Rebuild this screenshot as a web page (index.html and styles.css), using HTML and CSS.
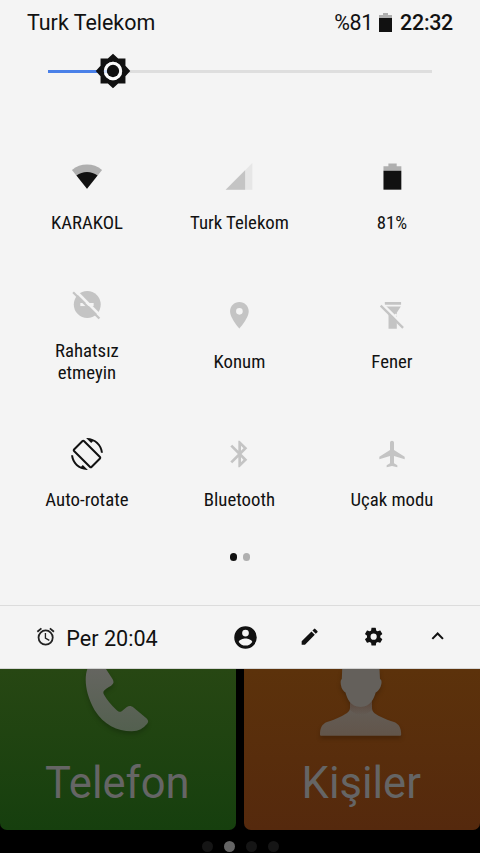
FILE: index.html
```html
<!DOCTYPE html>
<html lang="tr">
<head>
<meta charset="utf-8">
<title>Quick settings</title>
<link rel="stylesheet" href="styles.css">
</head>
<body>
<main class="screen">
  <section class="panel">
    <header class="status">
      <span class="carrier">Turk Telekom</span>
      <span class="percent">%81</span>
      <svg class="status-battery" viewBox="0 0 13 19"><path fill="#afafaf" d="M4 0h5v2h4v3H0V2h4z"/><path fill="#111" d="M0 5h13v14H0z"/></svg>
      <span class="clock">22:32</span>
    </header>
    <div class="slider">
      <div class="track"><div class="fill"></div></div>
      <svg class="thumb" viewBox="0 0 24 24"><path fill="#111" fill-rule="evenodd" d="M20.300 8.560V3.700h-4.860L12 .5 8.560 3.700H3.700v4.860L.5 12l3.200 3.440v4.860h4.860L12 23.500l3.440-3.200h4.860v-4.860L23.500 12zM12 5.900a6.100 6.100 0 1 1 0 12.200 6.100 6.100 0 0 1 0-12.200z"/><circle cx="12" cy="12" r="5.100" fill="none" stroke="#fff" stroke-opacity=".75" stroke-width="2.100"/><circle cx="12" cy="12" r="4.100" fill="#111"/></svg>
    </div>
    <div class="tiles">
      <div class="tile">
        <svg viewBox="0 0 24 24"><path fill="#afafaf" d="M.7 6.7a18 18 0 0 1 22.6 0L12 20.9z"/><path fill="#111" d="M4.1 10.9a12.8 12.8 0 0 1 15.8 0L12 20.9z"/></svg>
        <span class="label">KARAKOL</span>
      </div>
      <div class="tile">
        <svg viewBox="0 0 24 24"><path fill="#e6e6e6" d="M2 21.5h20v-20z"/><path fill="#c4c4c4" d="M2 21.5h14.6V6.9z"/></svg>
        <span class="label">Turk Telekom</span>
      </div>
      <div class="tile">
        <svg viewBox="0 0 24 24"><path fill="#afafaf" d="M9.300 1.900h6.200v2h3.500v3.400H5.600V3.900h3.700z"/><path fill="#111" d="M5.600 7.300H19v14.200H5.600z"/></svg>
        <span class="label">81%</span>
      </div>
      <div class="tile">
        <svg viewBox="0 0 24 24"><circle cx="12.200" cy="11.6" r="10.1" fill="#c4c4c4"/><path fill="#f4f4f4" d="M7 10.5h10v2.3H7z"/><path stroke="#f4f4f4" stroke-width="2" d="M3 .9l19.8 19.8"/><path stroke="#c4c4c4" stroke-width="1.7" d="M1.6 2.4l19.7 19.7"/></svg>
        <span class="label">Rahatsız<br>etmeyin</span>
      </div>
      <div class="tile">
        <svg viewBox="0 0 24 24"><path fill="#c4c4c4" d="M12.300 1.500c-3.87 0-7 3.13-7 7 0 5.25 7 13 7 13s7-7.75 7-13c0-3.87-3.13-7-7-7zm0 9.5a2.5 2.5 0 1 1 0-5 2.5 2.5 0 0 1 0 5z"/></svg>
        <span class="label">Konum</span>
      </div>
      <div class="tile">
        <svg viewBox="0 0 24 24"><path fill="#c4c4c4" d="M6.6 1.5h12.2v2H6.6zM6.9 4.800h11.7L15.6 9.6v12H9.4v-12z"/><path stroke="#f4f4f4" stroke-width="1.9" d="M4.5 2.800l17 17"/><circle cx="14.8" cy="11.2" r=".9" fill="#f4f4f4"/><path stroke="#c4c4c4" stroke-width="1.7" d="M3.500 4.200l16.800 16.700"/></svg>
        <span class="label">Fener</span>
      </div>
      <div class="tile">
        <svg viewBox="0 0 24 24"><path fill="#111" d="M16.48 2.52c3.27 1.55 5.61 4.72 5.97 8.48h1.5C23.44 4.84 18.29 0 12 0l-.66.03 3.81 3.81 1.33-1.32zm-6.25-.77c-.59-.59-1.54-.59-2.12 0L1.75 8.11c-.59.59-.59 1.54 0 2.12l12.02 12.02c.59.59 1.54.59 2.12 0l6.36-6.36c.59-.59.59-1.54 0-2.12L10.23 1.75zm4.6 19.44L2.81 9.17l6.36-6.36 12.02 12.02-6.36 6.36zm-7.31.29C4.25 19.94 1.91 16.76 1.55 13H.05C.56 19.16 5.71 24 12 24l.66-.03-3.81-3.81-1.33 1.32z"/></svg>
        <span class="label">Auto-rotate</span>
      </div>
      <div class="tile">
        <svg viewBox="0 0 24 24"><path fill="#c4c4c4" transform="translate(.5 0)" d="M17.71 7.71L12 2h-1v7.59L6.41 5 5 6.41 10.59 12 5 17.59 6.41 19 11 14.41V22h1l5.71-5.71-4.3-4.29 4.3-4.29zM13 5.83l1.88 1.88L13 9.59V5.83zm1.88 10.46L13 18.17v-3.76l1.88 1.88z"/></svg>
        <span class="label">Bluetooth</span>
      </div>
      <div class="tile">
        <svg viewBox="0 0 24 24"><path fill="#c4c4c4" d="M21.5 16v-2l-8-5V3.500c0-.83-.67-1.500-1.500-1.500s-1.500.67-1.500 1.500V9l-8 5v2l8-2.500V19l-2.500 1.500V22l4-1 4 1v-1.500L13.500 19v-5.500l8 2.500z"/></svg>
        <span class="label">Uçak modu</span>
      </div>
    </div>
    <div class="pager"><i class="on"></i><i></i></div>
    <footer class="footer">
      <svg class="alarm" viewBox="0 0 24 24"><path fill="#222" d="M22 5.720l-4.600-3.860-1.290 1.530 4.600 3.860L22 5.720zM7.880 3.390L6.600 1.860 2 5.710l1.290 1.530 4.590-3.850zM12.500 8H11v6l4.750 2.850.75-1.230-4-2.370V8zM12 4a9 9 0 1 0 0 18 9 9 0 0 0 0-18zm0 16a7 7 0 1 1 0-14 7 7 0 0 1 0 14z"/></svg>
      <span class="alarm-text">Per 20:04</span>
      <div class="actions">
        <span><svg class="user" viewBox="0 0 24 24"><path fill="#111" d="M12 2a10 10 0 1 0 0 20 10 10 0 0 0 0-20zm0 3a3 3 0 1 1 0 6 3 3 0 0 1 0-6zm0 14.200a7.200 7.200 0 0 1-6-3.220c.03-1.990 4-3.080 6-3.080s5.970 1.090 6 3.080a7.200 7.200 0 0 1-6 3.220z"/></svg></span>
        <span><svg viewBox="0 0 24 24"><path fill="#111" d="M3 17.250V21h3.750L17.810 9.940l-3.750-3.750L3 17.250zM20.710 7.040a1 1 0 0 0 0-1.410l-2.340-2.340a1 1 0 0 0-1.410 0l-1.830 1.830 3.750 3.750 1.830-1.830z"/></svg></span>
        <span><svg viewBox="0 0 24 24"><path fill="#111" d="M19.430 12.980c.04-.32.07-.64.07-.98s-.03-.66-.07-.98l2.110-1.650c.19-.15.24-.42.12-.64l-2-3.460c-.12-.22-.39-.3-.61-.22l-2.490 1c-.52-.4-1.080-.73-1.690-.98l-.38-2.650A.49.49 0 0 0 14 2h-4c-.25 0-.46.18-.49.42l-.38 2.650c-.61.25-1.170.59-1.690.98l-2.490-1c-.23-.09-.49 0-.61.22l-2 3.460c-.13.22-.07.49.12.64l2.110 1.650c-.04.32-.07.65-.07.98s.03.66.07.98l-2.110 1.650c-.19.15-.24.42-.12.64l2 3.460c.12.22.39.3.61.22l2.490-1c.52.4 1.080.73 1.690.98l.38 2.650c.03.24.24.42.49.42h4c.25 0 .46-.18.49-.42l.38-2.650c.61-.25 1.170-.59 1.690-.98l2.490 1c.23.09.49 0 .61-.22l2-3.460c.12-.22.07-.49-.12-.64l-2.110-1.650zM12 15.500a3.500 3.500 0 1 1 0-7 3.500 3.500 0 0 1 0 7z"/></svg></span>
        <span><svg viewBox="0 0 24 24"><path fill="none" stroke="#111" stroke-width="2.300" d="M6 14.500l6-6 6 6"/></svg></span>
      </div>
    </footer>
  </section>
  <section class="home">
    <div class="apps">
      <div class="app phone">
        <svg viewBox="0 669 236 80"><defs><linearGradient id="pg" x1="0" y1="0" x2="0" y2="1"><stop offset="0" stop-color="#656560"/><stop offset="1" stop-color="#53604f"/></linearGradient></defs><path fill="url(#pg)" d="M87.300 669C84 679 85.500 694 94.500 710C104 725 117 731.300 131.700 731.300C139 731.300 143.500 728 146.700 724.300C149 721.500 148.500 720 145.500 717.500L133.500 707.500C131 705.500 129 705.500 126.500 707.300L122 711C120 712.500 118.500 712 116 709.500C111 704.500 107.500 700.500 104.200 695C103 693 103 691.500 104.500 690.200C107 687.500 111 686.500 112.800 684C114 682.300 113.500 681 112.500 679L106 669Z"/></svg>
        <span>Telefon</span>
      </div>
      <div class="app people">
        <svg viewBox="244 669 236 80"><defs><linearGradient id="kg" x1="0" y1="0" x2="0" y2="1"><stop offset="0" stop-color="#64605b"/><stop offset="1" stop-color="#62554a"/></linearGradient><linearGradient id="ns" x1="0" y1="0" x2="0" y2="1"><stop offset="0" stop-color="#5a4438"/><stop offset="1" stop-color="#5a4438" stop-opacity="0"/></linearGradient></defs><path fill="url(#kg)" d="M350 698V708C350 711 347 713.500 342 716C336 719 331 721 327 722C322 724 320 728 320 734.500Q320 735.700 321 735.700H400Q401.200 735.700 401.200 734.500C401.200 728 399 724 394 722C390 721 385 719 379 716C374 713.500 372 711 372 708V698Z"/><path fill="url(#ns)" d="M350 700H372V710Q361 720 350 710Z"/><path fill="#64605b" d="M342.200 669L341.800 679C340.300 680 340.300 683 341.500 687.500C342.500 690 344 691.500 345.500 692.500C347 698 350 707 360.600 707C371 707 374 698 375.700 692.500C377.500 691.500 379 690 380.500 687C382 683 382 680 380 679L379.500 669Z"/></svg>
        <span>Kişiler</span>
      </div>
    </div>
    <div class="pages"><i></i><i class="on"></i><i></i><i></i></div>
  </section>
</main>
</body>
</html>
```
FILE: styles.css
```css
* { box-sizing: border-box; }
body { margin: 0; background: #000; font-family: Roboto, "Liberation Sans", sans-serif; color: #111; }
svg { display: block; flex: none; }
.screen { width: 480px; height: 853px; overflow: hidden; display: flex; flex-direction: column; }
.panel { height: 669px; flex: none; background: #f4f4f4; display: flex; flex-direction: column; border-bottom: 1px solid #d5d5d5; }
.status { height: 44px; padding: 1px 27px 0; display: flex; align-items: center; font-size: 21.450px; line-height: 44px; }
.carrier { flex: 1; }
.percent { letter-spacing: -.3px; }
.status-battery { width: 13px; height: 19px; margin: 0 8px 0 6px; }
.clock { font-weight: 500; letter-spacing: -.3px; }
.slider { position: relative; height: 54px; padding: 0 48px; display: flex; align-items: center; }
.track { width: 100%; height: 3px; background: #dedede; }
.fill { width: 65px; height: 100%; background: #4a80e8; }
.thumb { position: absolute; left: 95px; top: 9px; width: 36px; height: 36px; }
.tiles { flex: none; margin-top: 29.500px; padding: 0 11px 0 10.500px; display: grid; grid-template-columns: repeat(3, 152.500px); grid-auto-rows: 138.800px; }
.tile { display: flex; flex-direction: column; align-items: center; justify-content: center; gap: 18px; }
.tile svg { width: 32px; height: 32px; }
.label { font-size: 18.800px; line-height: 22px; text-align: center; font-stretch: 75%; white-space: nowrap; transform: translate(.2px, 1px) scaleY(1.02); }
.pager { margin-top: 9px; display: flex; justify-content: center; gap: 5.500px; }
.pager i { width: 7.700px; height: 7.700px; border-radius: 50%; background: #afafaf; }
.pager .on { background: #111; }
.footer { height: 63px; margin-top: auto; padding: 0 10.500px 0 34.500px; border-top: 1px solid #dcdcdc; display: flex; align-items: center; }
.footer svg { width: 21.300px; height: 21.300px; }
.footer .user { width: 27px; height: 27px; }
.alarm-text { margin-left: 10.500px; font-size: 21.600px; line-height: 30px; padding-top: 3px; }
.actions { margin-left: auto; display: grid; grid-template-columns: repeat(4, 64px); }
.actions span { height: 32px; display: flex; align-items: center; justify-content: center; }
.home { flex: 1; background: #000; }
.apps { display: flex; gap: 8px; height: 161px; }
.app { width: 236px; border-radius: 0 0 7px 7px; display: flex; flex-direction: column; align-items: center; color: #656565; font-size: 43.500px; line-height: 70px; }
.app span { margin-right: 1.500px; }
.app svg { width: 236px; height: 80px; filter: drop-shadow(0 3px 2px rgba(0, 0, 0, .2)); }
.phone { background: linear-gradient(#274713, #163f0e); }
.people { background: linear-gradient(#5c320b, #55290d); }
.pages { margin-top: 11px; display: flex; justify-content: center; gap: 11px; }
.pages i { width: 11px; height: 11px; border-radius: 50%; background: #151515; }
.pages .on { background: #656565; }
```
